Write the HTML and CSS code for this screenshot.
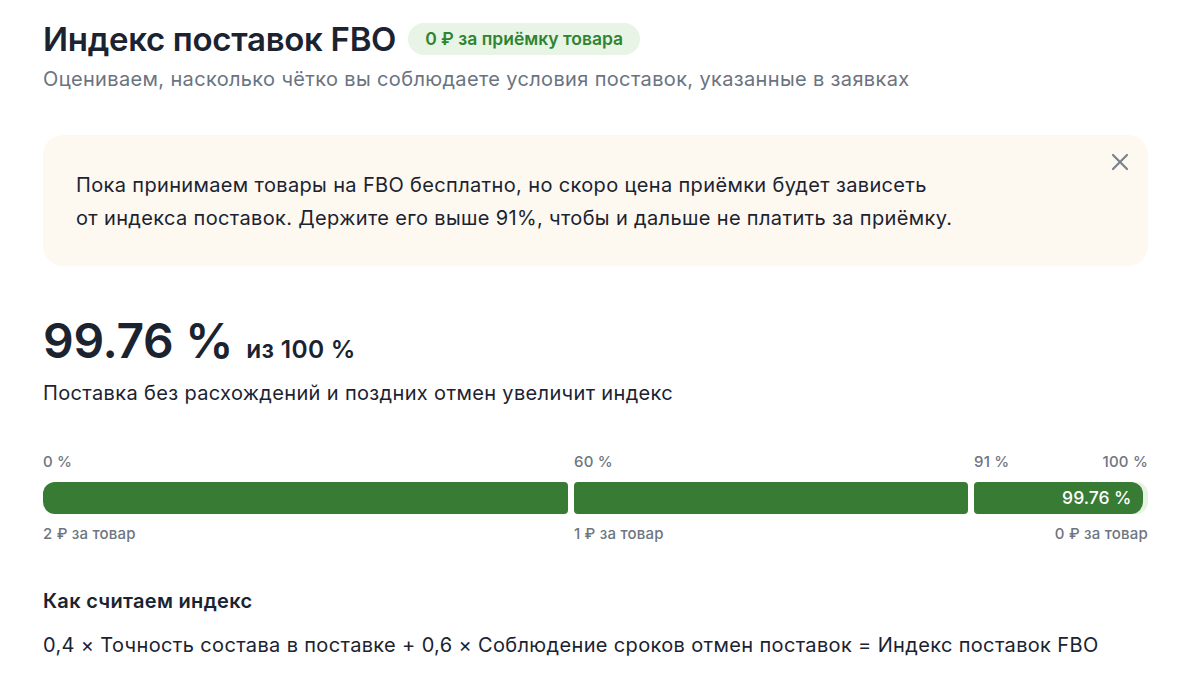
FILE: index.html
```html
<!DOCTYPE html>
<html lang="ru">
<head>
<meta charset="UTF-8">
<meta name="viewport" content="width=device-width, initial-scale=1.0">
<title>Индекс поставок FBO</title>
<link rel="stylesheet" href="styles.css">
</head>
<body>
<div class="page">
    <div class="header">
        <h1 class="title">Индекс поставок FBO</h1>
        <span class="badge">0 ₽ за приёмку товара</span>
    </div>
    <p class="subtitle">Оцениваем, насколько чётко вы соблюдаете условия поставок, указанные в заявках</p>

    <div class="notice">
        <p class="notice-text">Пока принимаем товары на FBO бесплатно, но скоро цена приёмки будет зависеть<br>от индекса поставок. Держите его выше 91%, чтобы и дальше не платить за приёмку.</p>
        <button class="notice-close" aria-label="Закрыть">
            <svg width="18" height="18" viewBox="0 0 18 18"><path d="M2 2 L16 16 M16 2 L2 16" stroke="#7b828c" stroke-width="2.2" stroke-linecap="round"/></svg>
        </button>
    </div>

    <div class="score">
        <span class="score-value">99.76 %</span>
        <span class="score-max">из 100 %</span>
    </div>
    <p class="score-hint">Поставка без расхождений и поздних отмен увеличит индекс</p>

    <div class="scale">
        <div class="scale-row labels">
            <span>0 %</span>
            <span>60 %</span>
            <span class="split"><span>91 %</span><span>100 %</span></span>
        </div>
        <div class="scale-row bar">
            <div class="seg seg-first"></div>
            <div class="seg"></div>
            <div class="seg seg-last"><div class="seg-fill">99.76 %</div></div>
        </div>
        <div class="scale-row labels prices">
            <span>2 ₽ за товар</span>
            <span>1 ₽ за товар</span>
            <span class="right">0 ₽ за товар</span>
        </div>
    </div>

    <h2 class="formula-title">Как считаем индекс</h2>
    <p class="formula">0,4 × Точность состава в поставке + 0,6 × Соблюдение сроков отмен поставок = Индекс поставок FBO</p>
</div>
</body>
</html>
```

FILE: styles.css
```css
body {
    margin: 0;
    padding: 0;
    background-color: #fff;
    font-family: 'Inter', 'Noto Sans', sans-serif;
    color: #1b2331;
}

.page {
    width: 1105px;
    padding: 18px 0 0 43px;
}

.header {
    display: flex;
    align-items: center;
    gap: 12px;
}

.title {
    margin: 0;
    font-size: 33px;
    font-weight: 600;
    letter-spacing: -0.3px;
    line-height: 42px;
}

.badge {
    background-color: #e8f4e6;
    color: #2f8430;
    font-size: 17.5px;
    font-weight: 600;
    padding: 0 17px;
    line-height: 32px;
    border-radius: 16px;
}

.subtitle {
    margin: 6px 0 0;
    font-size: 20px;
    letter-spacing: 0.35px;
    line-height: 26px;
    color: #6b737f;
}

.notice {
    margin-top: 43px;
    background-color: #fdf9f1;
    border-radius: 20px;
    height: 131px;
    display: flex;
    justify-content: space-between;
    box-sizing: border-box;
    padding: 0 18px 0 33px;
}

.notice-text {
    margin: 34px 0 0;
    font-size: 20px;
    letter-spacing: 0.35px;
    line-height: 33px;
}

.notice-close {
    border: none;
    background: none;
    padding: 0;
    width: 20px;
    height: 20px;
    margin-top: 18px;
    cursor: pointer;
}

.score {
    margin-top: 46px;
    display: flex;
    align-items: baseline;
    gap: 13px;
}

.score-value {
    font-size: 48px;
    font-weight: 600;
    line-height: 58px;
    letter-spacing: -0.3px;
}

.score-max {
    font-size: 24.5px;
    letter-spacing: 0.3px;
    font-weight: 600;
}

.score-hint {
    margin: 10px 0 0;
    font-size: 20px;
    letter-spacing: 0.35px;
    line-height: 26px;
}

.scale {
    margin-top: 47px;
}

.scale-row {
    display: grid;
    grid-template-columns: 525fr 394fr 174fr;
    column-gap: 6px;
}

.labels {
    font-size: 15px;
    letter-spacing: 0.2px;
    font-weight: 500;
    color: #6e7580;
    line-height: 18px;
}

.split {
    display: flex;
    justify-content: space-between;
}

.right {
    text-align: right;
}

.bar {
    height: 32px;
    margin: 11px 0 11px;
}

.seg {
    background-color: #377b35;
    border-radius: 4px;
}

.seg-first {
    border-radius: 12px 4px 4px 12px;
}

.seg-last {
    background-color: #e6f2e4;
    border-radius: 4px 12px 12px 4px;
}

.seg-fill {
    width: 97.4%;
    height: 100%;
    background-color: #377b35;
    border-radius: 4px 12px 12px 4px;
    color: #fff;
    font-size: 17.5px;
    font-weight: 500;
    line-height: 32px;
    text-align: right;
    padding-right: 12px;
    box-sizing: border-box;
}

.formula-title {
    margin: 45px 0 0;
    font-size: 20px;
    letter-spacing: 0.3px;
    font-weight: 600;
    line-height: 26px;
}

.formula {
    margin: 18px 0 0;
    font-size: 20px;
    letter-spacing: 0.35px;
    line-height: 26px;
}
```
